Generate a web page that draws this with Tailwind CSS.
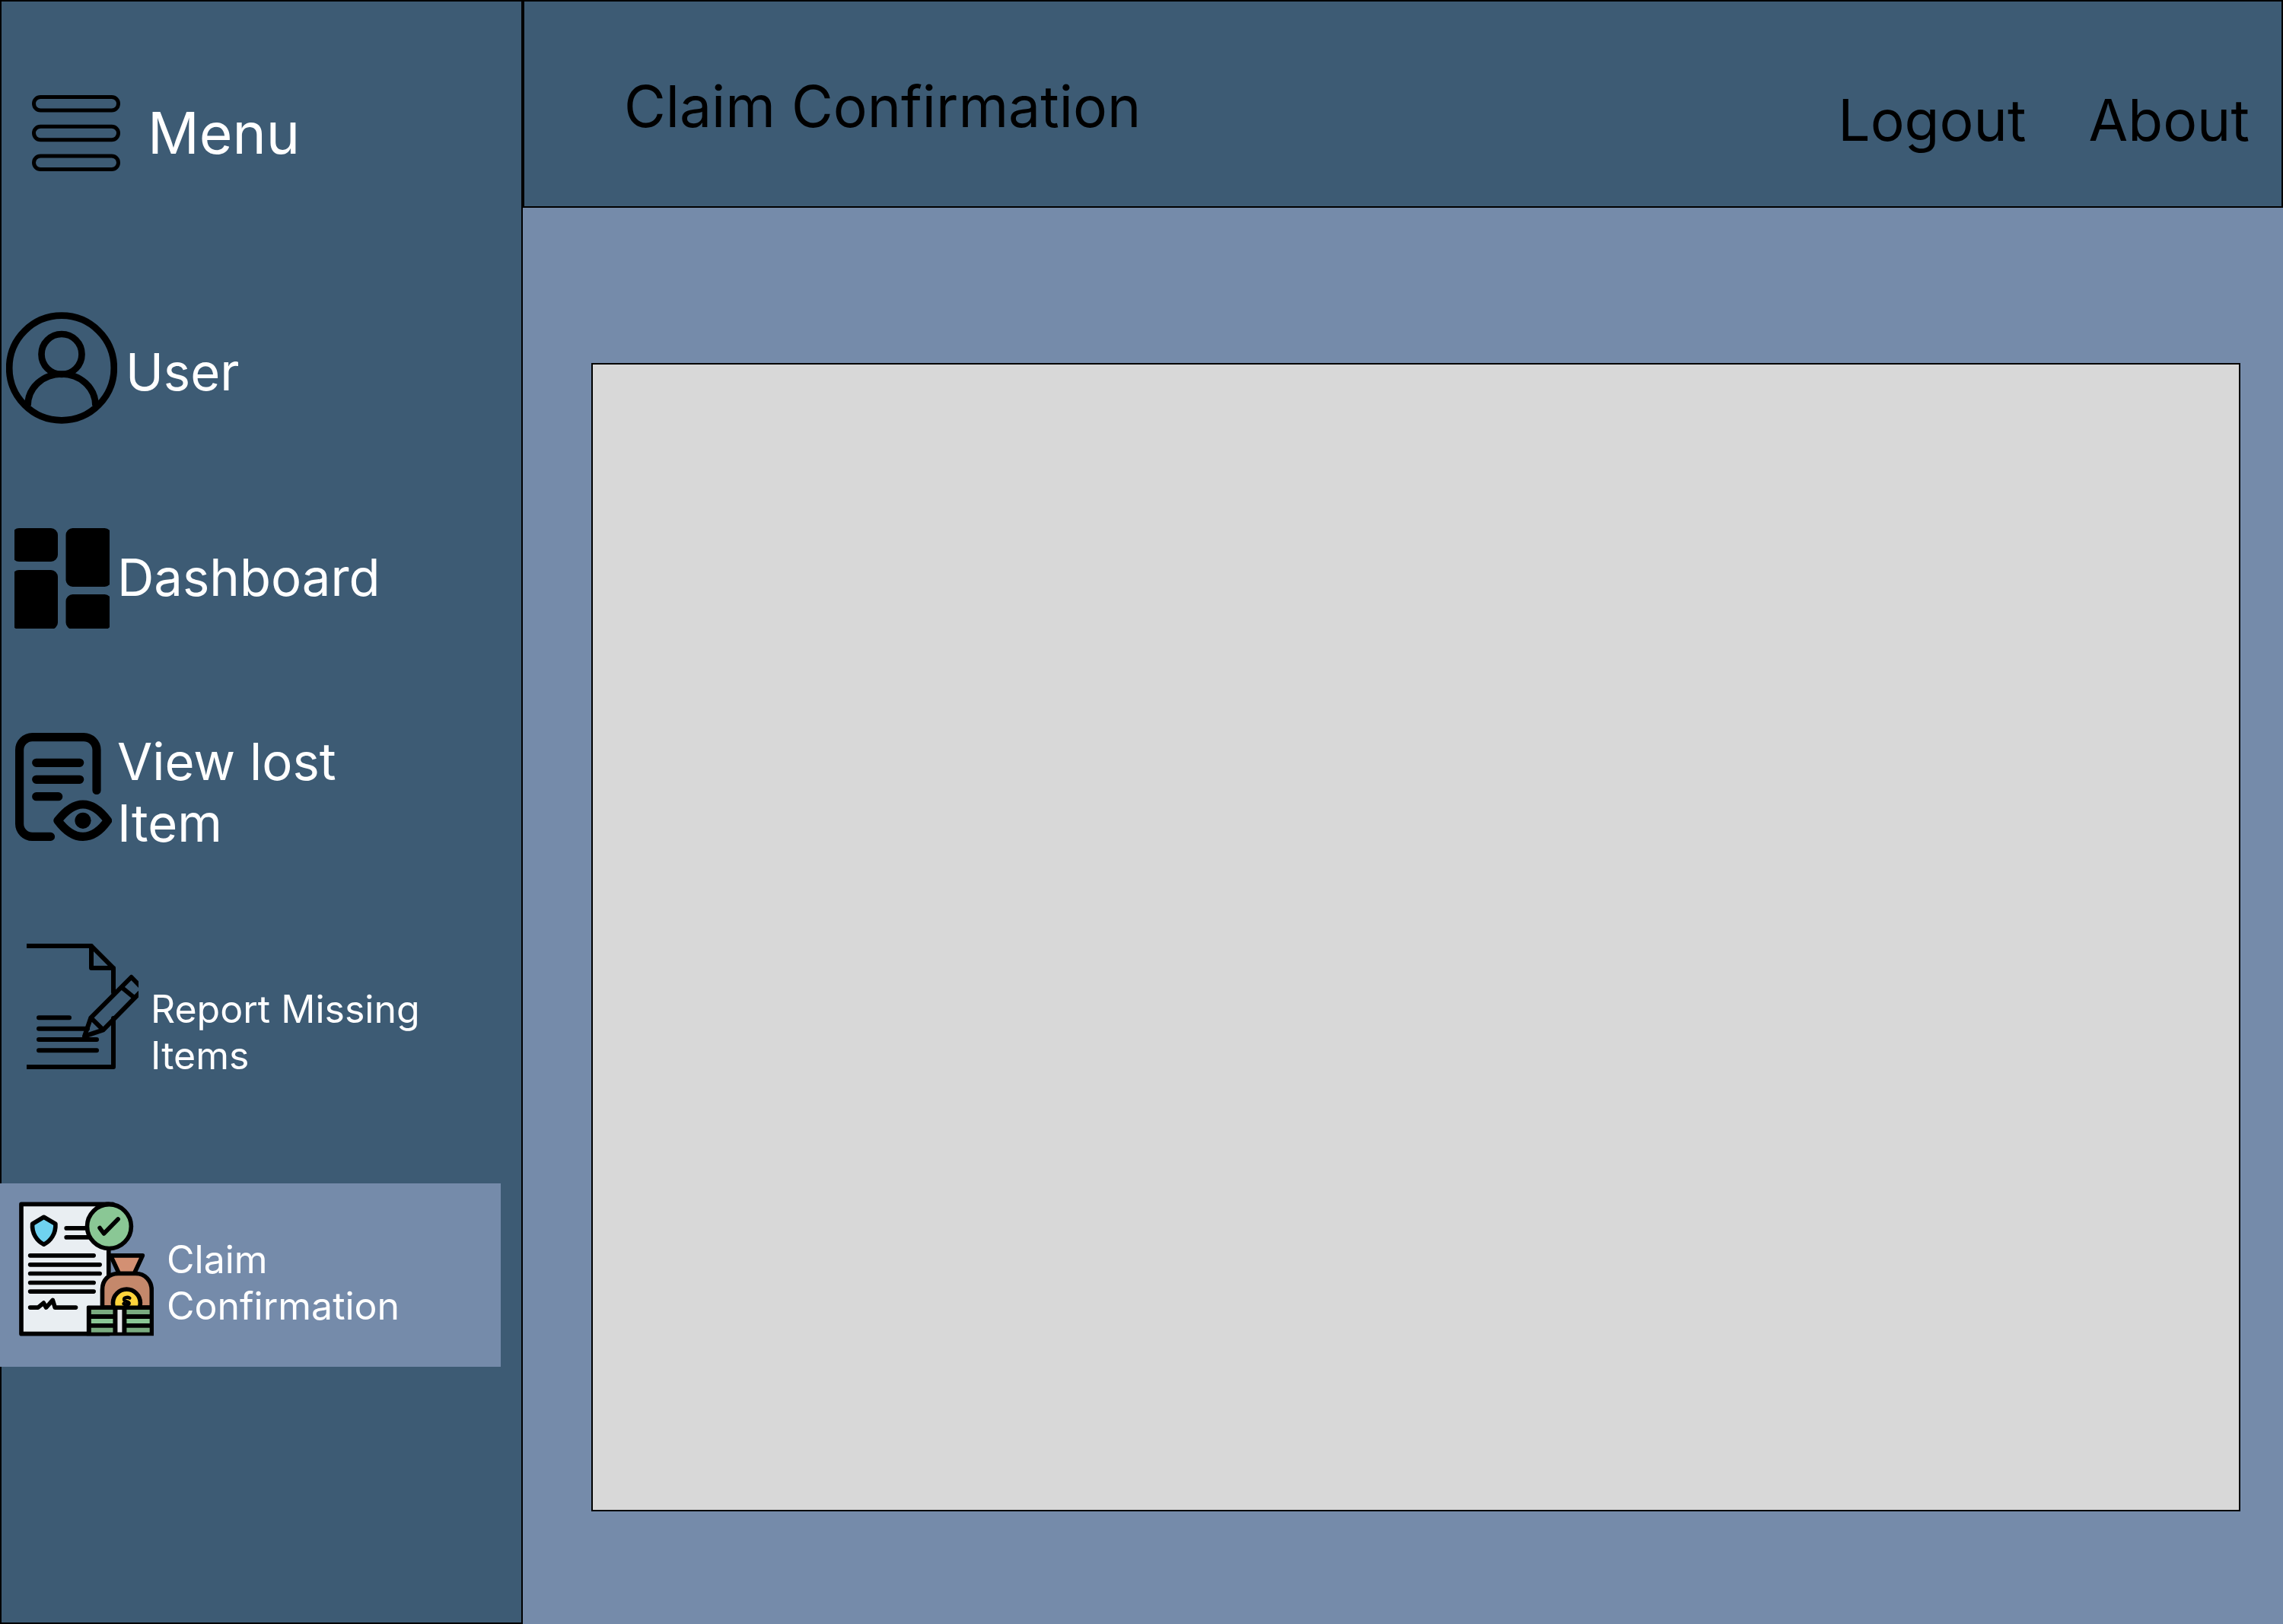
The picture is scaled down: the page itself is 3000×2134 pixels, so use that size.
<!DOCTYPE html>
<html lang="en">
<head>
<meta charset="utf-8">
<meta name="viewport" content="width=device-width, initial-scale=1">
<title>Claim Confirmation</title>
<script src="https://cdn.jsdelivr.net/npm/@tailwindcss/browser@4"></script>
</head>
<body class="flex min-h-screen bg-[#758baa] font-['Inter',sans-serif] text-black">

<aside class="w-[22.9%] shrink-0 border-2 border-black bg-[#3d5b74] text-white">
  <button type="button" class="mt-[123px] ml-10 flex h-[100px] items-center gap-9 text-[75px] leading-[91px]" aria-label="Menu">
    <svg class="h-[100px] w-[116px] shrink-0" viewBox="0 0 116 100" fill="none" stroke="#000" stroke-width="5" aria-hidden="true">
      <rect x="2.5" y="2.5" width="111" height="17.5" rx="8.7"/>
      <rect x="2.5" y="41.2" width="111" height="17.5" rx="8.7"/>
      <rect x="2.5" y="80" width="111" height="17.5" rx="8.7"/>
    </svg>
    <span class="pb-0.5">Menu</span>
  </button>

  <nav class="mt-[185px]">
    <ul>
      <li>
        <a href="#user" class="flex items-center gap-[11px] pl-1.5 text-[67px] leading-[81px]">
          <svg class="h-[147px] w-[146px] shrink-0" viewBox="0 0 146 147" fill="none" stroke="#000" stroke-width="8.7" aria-hidden="true">
            <circle cx="73" cy="73.5" r="68.8"/>
            <circle cx="73" cy="55.5" r="26.5"/>
            <path d="M28.5 123C28.500 99 49 81.500 73 81.500S117.500 99 117.500 123"/>
          </svg>
          <span class="pt-2.5">User</span>
        </a>
      </li>
      <li class="mt-[137px]">
        <a href="#dashboard" class="flex items-start gap-2.5 pl-[17px] text-[67px] leading-[81px]">
          <svg class="h-[132px] w-[125px] shrink-0" viewBox="0 0 125 132" aria-hidden="true">
            <rect x="-3" y="0" width="60" height="44" rx="9"/>
            <rect x="-3" y="55" width="60" height="78" rx="9"/>
            <rect x="67.500" y="0" width="60" height="77" rx="9"/>
            <rect x="67.500" y="87" width="60" height="46" rx="9"/>
          </svg>
          <span class="pt-6">Dashboard</span>
        </a>
      </li>
      <li class="mt-[134px]">
        <a href="#lost" class="flex items-start gap-[7px] pl-[18px] text-[67px] leading-[81px]">
          <svg class="mt-[3px] h-[142px] w-[127px] shrink-0" viewBox="0 0 127 142" fill="none" stroke="#000" stroke-width="11.200" stroke-linecap="round" stroke-linejoin="round" aria-hidden="true">
            <path d="M107 75.500V22.500A17 17 0 0 0 90 5.600H22.500A17 17 0 0 0 5.600 22.500V119.500A17 17 0 0 0 22.500 136.400H46.500"/>
            <path d="M27.700 39.300H84.700M27.700 61.300H84.700M27.700 83.700H56.700"/>
            <path d="M56 115.300C64 105 75 94 89 94S114 105 121.500 115.300C114 126 103 136.400 89 136.400S64 126 56 115.300Z"/>
            <circle cx="89" cy="115.300" r="10.600" fill="#000" stroke="none"/>
          </svg>
          <span>View lost<br>Item</span>
        </a>
      </li>
      <li class="mt-[118px]">
        <a href="#report" class="flex items-start gap-4 pl-[33px] text-[50px] leading-[61px]">
          <svg class="h-[165px] w-[147px] shrink-0" viewBox="0 0 147 165" fill="none" stroke="#000" stroke-width="6" stroke-linecap="round" stroke-linejoin="round" aria-hidden="true">
            <path d="M-4 3H85L114 32V64M85 3V32H114M114 98V162H-4"/>
            <path d="M16 97.300H56M16 111.700H80M16 126H92M16 140.300H92"/>
            <path d="M76 121.700L84.400 97.300L137.600 44L153 60L100.600 113.300ZM84.400 97.300L100.600 113.300M125 57.500L141.500 71"/>
          </svg>
          <span class="pt-14">Report Missing<br>Items</span>
        </a>
      </li>
      <li class="mt-[137px] mr-[27px] -ml-0.5">
        <a href="#claim" aria-current="page" class="flex items-start gap-[17px] bg-[#758baa] pt-6 pb-10 pl-[25px] text-[50px] leading-[61px]">
          <svg class="h-[177px] w-[177px] shrink-0" viewBox="75 117 532 528" fill="none" stroke="#000" stroke-width="17" stroke-linecap="round" stroke-linejoin="round" aria-hidden="true">
            <path d="M84 125H429V637H84Z" fill="#e9eef2"/>
            <path d="M420 125H445"/>
            <path d="M262 220H345M262 256H355M119 328H370M119 364H394M119 399H394M119 435H370M119 470H370"/>
            <path d="M119 533H150L172 515L182 533L208 504L217 533H299"/>
            <path d="M173 176L219 203C221 240 201 270 173 284C145 270 125 240 128 203Z" fill="#6fd2f0"/>
            <circle cx="431" cy="213" r="87" fill="#8ac795"/>
            <path d="M394 219L410 241L466 184"/>
            <path d="M437 328H563L530 399H470Z" fill="#d39073"/>
            <path d="M404 533V462C404 424 430 399 467 399H536C573 399 599 428 599 466V533Z" fill="#c4886b"/>
            <circle cx="500" cy="515" r="54" fill="#ffd43b"/>
            <path d="M512 496C503 490 488 494 490 503C492 511 511 509 510 517C508 524 495 524 488 518" stroke-width="13"/>
            <g stroke="none">
              <path d="M348 525H607V645H342V531Q342 525 348 525Z" fill="#000"/>
              <path d="M360 542H446V560H360ZM500 542H591V560H500ZM360 613H446V631H360ZM500 613H591V631H500Z" fill="#7aab80"/>
              <path d="M360 578H446V596H360ZM500 578H591V596H500Z" fill="#8ac795"/>
              <path d="M464 542H482V631H464Z" fill="#e6e7eb"/>
            </g>
          </svg>
          <span class="pt-[46px]">Claim<br>Confirmation</span>
        </a>
      </li>
    </ul>
  </nav>
</aside>

<div class="flex min-w-0 flex-1 flex-col">
  <header class="flex items-start justify-between border-2 border-black bg-[#3d5b74] pt-[92px] pr-[42px] pb-[68px] pl-[131px] text-[75px] leading-[91px]">
    <h1>Claim Confirmation</h1>
    <nav class="flex gap-[82px] pt-[18px]">
      <a href="#logout">Logout</a>
      <a href="#about">About</a>
    </nav>
  </header>
  <main class="flex flex-1 flex-col pt-[204px] pr-14 pb-[148px] pl-[90px]">
    <section class="flex-1 border-2 border-black bg-[#d8d8d8]" aria-label="Claims"></section>
  </main>
</div>

</body>
</html>
